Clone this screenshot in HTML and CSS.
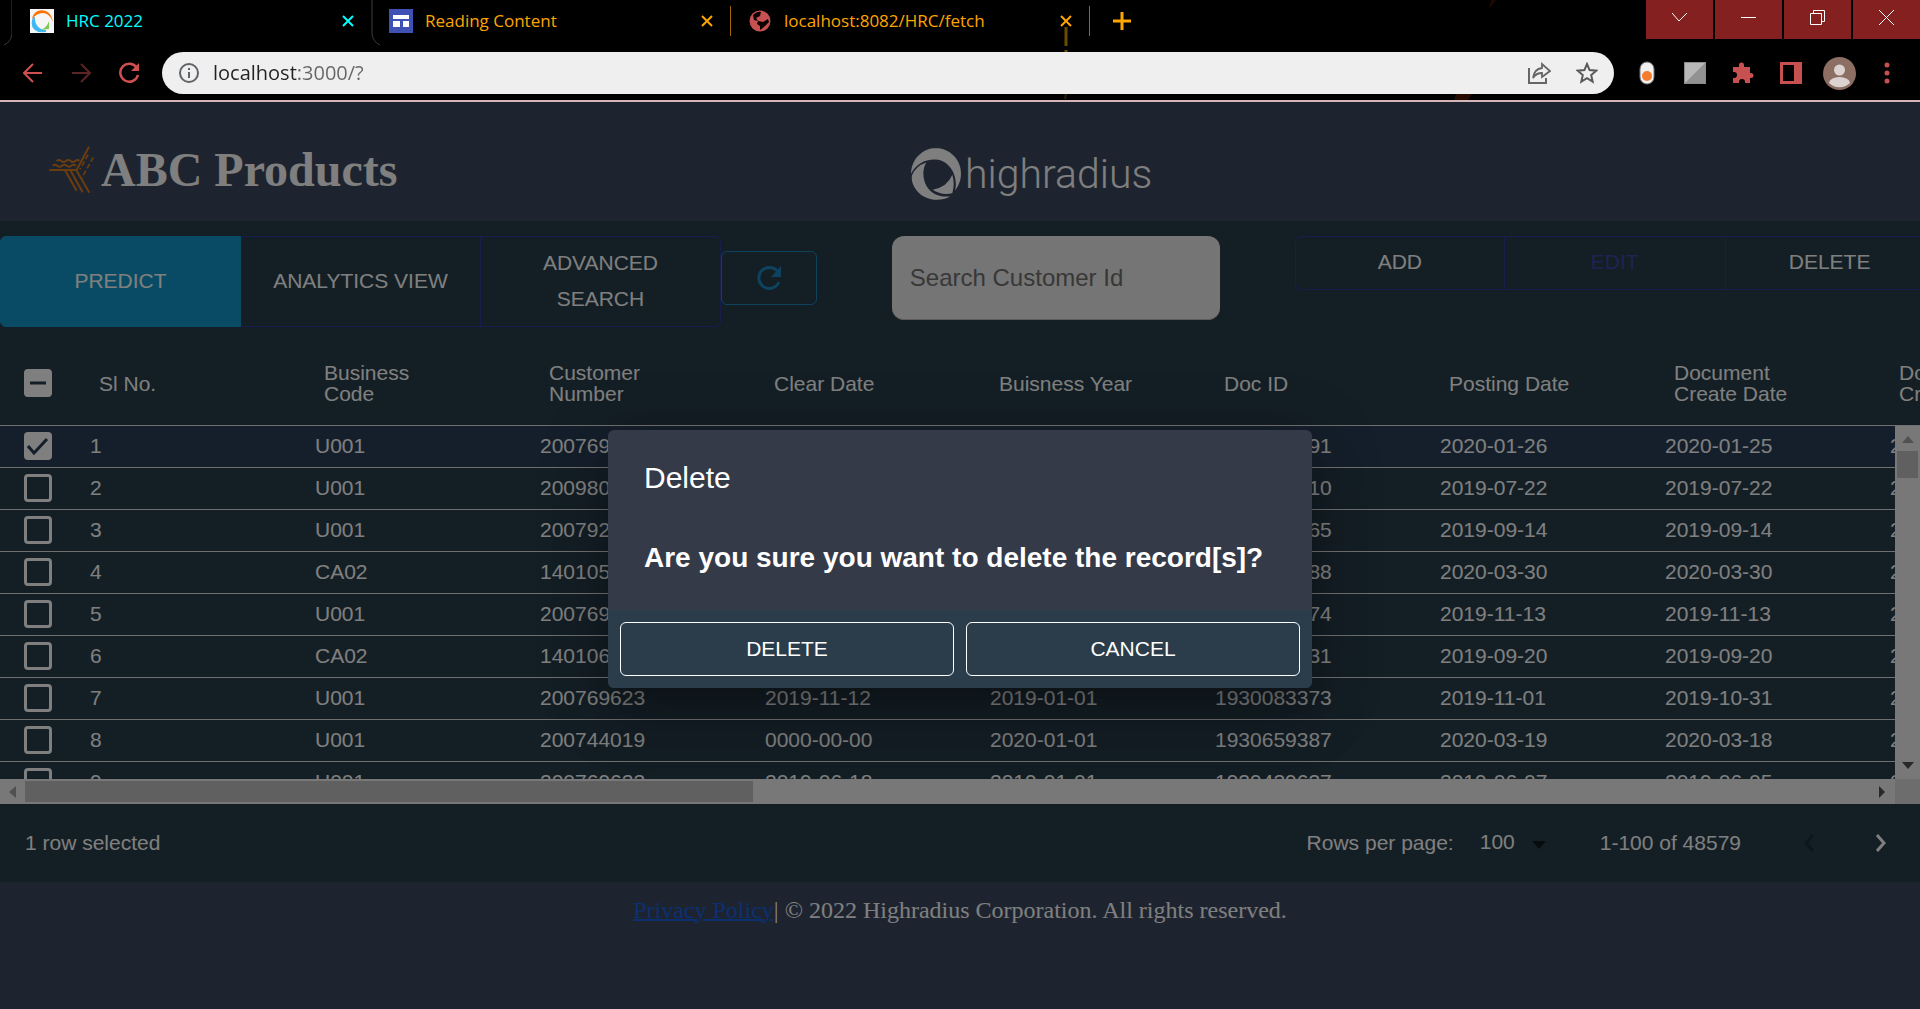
FILE: index.html
```html
<!DOCTYPE html>
<html lang="en">
<head>
<meta charset="utf-8">
<title>HRC 2022</title>
<link rel="stylesheet" href="styles.css">
</head>
<body>
<header class="browser">
  <svg class="browser-sparks" width="460" height="100" viewBox="0 0 460 100" aria-hidden="true">
    <path d="M27 27v19M27 50v2" stroke="#6a4c00" stroke-width="3"/>
    <path d="M27 94l-1 5" stroke="#2c2000" stroke-width="2"/>
    <path d="M417 94h16l-4 6h-14z" fill="#260b00"/>
    <path d="M457 0h-5l-2 9z" fill="#1c0a00"/>
  </svg>
  <div class="tab-row">
    <svg class="tab-edge" width="12" height="46" viewBox="0 0 12 46" aria-hidden="true"><path d="M12 0V34Q11 42 4 45" fill="none" stroke="#3c3c3c"/></svg>
    <div class="tab tab-active">
      <svg width="24" height="24" viewBox="0 0 24 24" aria-hidden="true"><rect width="24" height="24" fill="#f6f6f6"/><path d="M2 10C4-2 21-2 23 13 19 2 9 1 2 10z" fill="#ff7200"/><path d="M4 8C-1 19 7 24 16 22 8 21 4 16 4 8z" fill="#3fb8f5" stroke="#3fb8f5" stroke-width="1.5"/><path d="M19 12v8l-9 1q7-2 9-9z" fill="#7cc95a"/></svg>
      <span class="tab-title">HRC 2022</span>
      <button class="tab-close" aria-label="Close tab"><svg width="12" height="12" viewBox="0 0 12 12"><path d="M1 1l10 10M11 1L1 11"/></svg></button>
      <svg class="tab-curve" width="10" height="46" viewBox="0 0 10 46" aria-hidden="true"><path d="M1 0V34Q2 42 9 45" fill="none" stroke="#3c3c3c"/></svg>
    </div>
    <div class="tab">
      <svg width="24" height="24" viewBox="0 0 24 24" aria-hidden="true"><rect width="24" height="24" fill="#3f51b5"/><path d="M4 6h16v4H4zM4 12h7v6H4zM14 12h6v6h-6z" fill="#fff"/></svg>
      <span class="tab-title">Reading Content</span>
      <button class="tab-close" aria-label="Close tab"><svg width="12" height="12" viewBox="0 0 12 12"><path d="M1 1l10 10M11 1L1 11"/></svg></button>
      <span class="tab-rule"></span>
    </div>
    <div class="tab">
      <svg width="24" height="24" viewBox="0 0 24 24" aria-hidden="true"><circle cx="12" cy="12" r="10.500" fill="#c75050"/><path d="M5 6q4-4 8-3l-1 4-4 2 2 3-4-1zM10 12l5 1 5-3 1 3-5 5-4 3v-4l-3-2z" fill="#0a0000"/></svg>
      <span class="tab-title">localhost:8082/HRC/fetch</span>
      <button class="tab-close" aria-label="Close tab"><svg width="12" height="12" viewBox="0 0 12 12"><path d="M1 1l10 10M11 1L1 11"/></svg></button>
      <span class="tab-rule"></span>
    </div>
    <button class="new-tab" aria-label="New tab"><svg width="18" height="18" viewBox="0 0 18 18"><path d="M9 0v18M0 9h18" stroke="#ffa500" stroke-width="3"/></svg></button>
    <div class="window-buttons">
      <button aria-label="Search tabs"><svg width="17" height="17" viewBox="0 0 17 17"><path d="M1 4l7 8 8-8"/></svg></button>
      <button aria-label="Minimize"><svg width="17" height="17" viewBox="0 0 17 17"><path d="M1 8.500h15"/></svg></button>
      <button aria-label="Restore"><svg width="17" height="17" viewBox="0 0 17 17"><path d="M1.500 4.500h11v11h-11zM4.500 4V1.500h11v11H13"/></svg></button>
      <button aria-label="Close"><svg width="17" height="17" viewBox="0 0 17 17"><path d="M1 1l15 15M16 1L1 16"/></svg></button>
    </div>
  </div>
  <div class="nav-row">
    <button class="slot" aria-label="Back"><svg width="20" height="20" viewBox="0 0 20 20"><path d="M19 10H2M10 1L1 10l9 9" fill="none" stroke="#d05050" stroke-width="2"/></svg></button>
    <button class="slot" aria-label="Forward"><svg width="20" height="20" viewBox="0 0 20 20"><path d="M1 10h17M10 1l9 9-9 9" fill="none" stroke="#5a2424" stroke-width="2"/></svg></button>
    <button class="slot" aria-label="Reload"><svg width="22" height="22" viewBox="0 0 22 22"><path d="M19 6A9 9 0 1 0 20 13" fill="none" stroke="#d05050" stroke-width="2.500"/><path d="M21 1v8h-8z" fill="#d05050"/></svg></button>
    <form class="omnibox">
      <button type="button" class="slot" aria-label="Site information"><svg width="22" height="22" viewBox="0 0 22 22"><circle cx="11" cy="11" r="9" fill="none" stroke="#5f6368" stroke-width="2"/><path d="M11 10v6M11 6v2" stroke="#5f6368" stroke-width="2"/></svg></button>
      <input class="address" type="text" aria-label="Address" value="localhost:3000/?">
      <button type="button" class="slot" aria-label="Share"><svg width="24" height="24" viewBox="0 0 24 24" fill="none" stroke="#666" stroke-width="2"><path d="M2 7v15h17v-5"/><path d="M6 17Q7 8 15 7V3l8 7-8 6v-4Q9 12 6 17z" stroke-width="1.800"/></svg></button>
      <button type="button" class="slot" aria-label="Bookmark"><svg width="22" height="22" viewBox="0 0 22 22"><path d="M11 2l2.600 6.100 6.600.6-5 4.400 1.500 6.500-5.700-3.400-5.700 3.400 1.500-6.500-5-4.400 6.600-.6z" fill="none" stroke="#5a5a5a" stroke-width="2"/></svg></button>
    </form>
    <button class="slot" aria-label="Extension"><svg width="16" height="24" viewBox="0 0 16 24"><rect x="1" y="1" width="14" height="22" rx="7" fill="#f0f0f0" stroke="#777"/><circle cx="8" cy="15" r="5" fill="#f57c2c"/></svg></button>
    <button class="slot" aria-label="Extension"><svg width="22" height="22" viewBox="0 0 22 22"><rect x=".5" y=".5" width="21" height="21" fill="#b8b8b8" stroke="#8b8b8b"/><path d="M21 1v20H1z" fill="#929292"/></svg></button>
    <button class="slot" aria-label="Extensions"><svg width="22" height="22" viewBox="0 0 22 22"><path d="M1 5h6V3a2.500 2.500 0 0 1 5 0v2h6v6h1a2.500 2.500 0 0 1 0 5h-1v5h-5v-1a3 3 0 0 0-6 0v1H1v-5h1a3 3 0 0 0 0-6H1z" fill="#c75050"/></svg></button>
    <button class="slot" aria-label="Side panel"><svg width="22" height="22" viewBox="0 0 22 22"><path d="M0 0h22v22H0zM3 3v16h11V3z" fill="#c75050" fill-rule="evenodd"/></svg></button>
    <button class="slot" aria-label="Profile"><svg width="33" height="33" viewBox="0 0 33 33"><circle cx="16.500" cy="16.500" r="16.500" fill="#8d6e63"/><circle cx="16.500" cy="13" r="5.500" fill="#dcd3d0"/><path d="M6 26a10.500 6 0 0 1 21 0 15 15 0 0 1-21 0z" fill="#dcd3d0"/></svg></button>
    <button class="slot" aria-label="Menu"><svg width="6" height="22" viewBox="0 0 6 22" fill="#c75050"><circle cx="3" cy="3" r="2.500"/><circle cx="3" cy="11" r="2.500"/><circle cx="3" cy="19" r="2.500"/></svg></button>
  </div>
</header>

<div class="viewport">
  <main class="app">
    <div class="brand-bar">
      <div class="account">
        <svg width="45" height="47" viewBox="27 18 135 141" fill="none" stroke="#d67a1c" stroke-width="6" aria-hidden="true">
          <path d="M28 90h82L147 20M76 92l34 60M92 92l36 65M110 92l38 66"/>
          <path d="M50 63q7-6 14 0t14 0 14 0 14 0 12 0M38 77q7-6 14 0t14 0 14 0 14 0 14 0"/>
          <path d="M144 44l-24 44M160 52l-36 64" stroke-dasharray="15 8" stroke-width="5"/>
        </svg>
        <h1>ABC Products</h1>
      </div>
      <div class="logo">
        <svg width="50" height="52" viewBox="33 23 150 155" aria-hidden="true">
          <path d="M33 100A75 77 0 1 1 165 150C176 108 150 60 108 57 76 55 48 70 33 100z" fill="#fff"/>
          <path d="M36 104Q48 76 79 66C62 92 70 136 96 155Q115 170 150 168C122 184 75 182 50 150Q32 128 36 104z" fill="#fff"/>
          <path d="M98 148Q142 140 157 103Q165 130 157 158Q125 166 98 148z" fill="#fff"/>
        </svg>
        <span>highradius</span>
      </div>
    </div>

    <section class="panel">
      <div class="toolbar">
        <div class="group group-left">
          <button class="predict">PREDICT</button><button>ANALYTICS VIEW</button><button>ADVANCED SEARCH</button>
        </div>
        <button class="refresh" aria-label="Refresh"><svg width="24" height="26" viewBox="0 0 24 26"><path d="M21 7A10.500 10.500 0 1 0 22 17" fill="none" stroke="#1c84bd" stroke-width="3"/><path d="M24 1v11H14z" fill="#1c84bd"/></svg></button>
        <input class="search" type="text" placeholder="Search Customer Id" aria-label="Search Customer Id">
        <div class="group group-right">
          <button>ADD</button><button class="edit">EDIT</button><button>DELETE</button>
        </div>
      </div>

      <div class="grid">
        <table>
          <thead>
            <tr><th class="tick"><input type="checkbox" class="partial" aria-label="Select all rows"></th><th>Sl No.</th><th>Business<br>Code</th><th>Customer<br>Number</th><th>Clear Date</th><th>Buisness Year</th><th>Doc ID</th><th>Posting Date</th><th>Document<br>Create Date</th><th>Document<br>Create Date</th></tr>
          </thead>
          <tbody>
            <tr class="selected"><td class="tick"><input type="checkbox" checked aria-label="Select row 1"></td><td>1</td><td>U001</td><td>200769623</td><td>2020-02-11</td><td>2020-01-01</td><td>1930438491</td><td>2020-01-26</td><td>2020-01-25</td><td>2020-01-26</td></tr>
            <tr><td class="tick"><input type="checkbox" aria-label="Select row 2"></td><td>2</td><td>U001</td><td>200980828</td><td>2019-08-08</td><td>2019-01-01</td><td>1929646410</td><td>2019-07-22</td><td>2019-07-22</td><td>2019-07-22</td></tr>
            <tr><td class="tick"><input type="checkbox" aria-label="Select row 3"></td><td>3</td><td>U001</td><td>200792734</td><td>2019-12-30</td><td>2019-01-01</td><td>1929873765</td><td>2019-09-14</td><td>2019-09-14</td><td>2019-09-14</td></tr>
            <tr><td class="tick"><input type="checkbox" aria-label="Select row 4"></td><td>4</td><td>CA02</td><td>140105686</td><td>0000-00-00</td><td>2020-01-01</td><td>2960623488</td><td>2020-03-30</td><td>2020-03-30</td><td>2020-03-30</td></tr>
            <tr><td class="tick"><input type="checkbox" aria-label="Select row 5"></td><td>5</td><td>U001</td><td>200769623</td><td>2019-11-25</td><td>2019-01-01</td><td>1930147974</td><td>2019-11-13</td><td>2019-11-13</td><td>2019-11-13</td></tr>
            <tr><td class="tick"><input type="checkbox" aria-label="Select row 6"></td><td>6</td><td>CA02</td><td>140106181</td><td>2019-12-04</td><td>2019-01-01</td><td>2960581231</td><td>2019-09-20</td><td>2019-09-20</td><td>2019-09-20</td></tr>
            <tr><td class="tick"><input type="checkbox" aria-label="Select row 7"></td><td>7</td><td>U001</td><td>200769623</td><td>2019-11-12</td><td>2019-01-01</td><td>1930083373</td><td>2019-11-01</td><td>2019-10-31</td><td>2019-11-01</td></tr>
            <tr><td class="tick"><input type="checkbox" aria-label="Select row 8"></td><td>8</td><td>U001</td><td>200744019</td><td>0000-00-00</td><td>2020-01-01</td><td>1930659387</td><td>2020-03-19</td><td>2020-03-18</td><td>2020-03-19</td></tr>
            <tr><td class="tick"><input type="checkbox" aria-label="Select row 9"></td><td>9</td><td>U001</td><td>200769623</td><td>2019-06-18</td><td>2019-01-01</td><td>1929439637</td><td>2019-06-07</td><td>2019-06-05</td><td>0000-00-00</td></tr>
          </tbody>
        </table>
        <div class="scroll-y" aria-hidden="true">
          <svg width="12" height="8" viewBox="0 0 12 8"><path d="M0 8l6-7 6 7z" fill="#a3a3a3"/></svg>
          <span class="thumb"></span>
          <svg width="12" height="8" viewBox="0 0 12 8"><path d="M0 0l6 7 6-7z" fill="#505050"/></svg>
        </div>
      </div>
      <div class="scroll-x" aria-hidden="true">
        <div class="track">
          <svg width="7" height="12" viewBox="0 0 7 12"><path d="M7 0L0 6l7 6z" fill="#a3a3a3"/></svg>
          <span class="thumb"></span>
          <svg width="7" height="12" viewBox="0 0 7 12"><path d="M0 0l6 6-6 6z" fill="#505050"/></svg>
        </div>
      </div>

      <div class="pager">
        <span class="picked">1 row selected</span>
        <label for="rows">Rows per page:</label>
        <select id="rows"><option>100</option></select>
        <span class="range">1-100 of 48579</span>
        <button class="prev" disabled aria-label="Previous page"><svg width="12" height="20" viewBox="0 0 12 20"><path d="M10 2L3 10l7 8" /></svg></button>
        <button class="next" aria-label="Next page"><svg width="12" height="20" viewBox="0 0 12 20"><path d="M2 2l7 8-7 8"/></svg></button>
      </div>
    </section>

    <footer class="legal"><a href="#privacy">Privacy Policy</a>| © 2022 Highradius Corporation. All rights reserved.</footer>
  </main>

  <div class="backdrop">
    <div class="dialog" role="dialog" aria-labelledby="dialog-title">
      <h2 id="dialog-title">Delete</h2>
      <p>Are you sure you want to delete the record[s]?</p>
      <div class="dialog-actions"><button>DELETE</button><button>CANCEL</button></div>
    </div>
  </div>
</div>
</body>
</html>
```
FILE: styles.css
```css
* { box-sizing: border-box; }

html, body { height: 100%; }

body {
  margin: 0;
  display: flex;
  flex-direction: column;
  overflow: hidden;
  background: #000;
  font: 21px/24px "Liberation Sans", Arial, sans-serif;
}

button {
  display: flex;
  align-items: center;
  justify-content: center;
  margin: 0;
  padding: 0;
  border: 0;
  background: none;
  color: inherit;
  font: inherit;
}

svg { flex: none; display: block; }

/* Browser window */
.browser {
  position: relative;
  flex: none;
  border-bottom: 2px solid #d3b5b5;
  font: 18px/24px "Open Sans", "Noto Sans", sans-serif;
}

.browser-sparks { position: absolute; top: 0; left: 1039px; }

.tab-row { position: relative; display: flex; height: 46px; }
.tab-edge { margin-right: 18px; }

.tab {
  position: relative;
  display: flex;
  align-items: center;
  gap: 12px;
  width: 359px;
  height: 42px;
  padding-right: 35px;
  color: #ffa500;
}
.tab-active { color: #0ff; }
.tab-title { flex: 1; font-size: 17px; white-space: nowrap; }
.tab-close svg { fill: none; stroke: currentColor; stroke-width: 2; }
.tab-rule { position: absolute; top: 6px; right: 17px; width: 1px; height: 30px; background: #a06800; }
.tab-curve { position: absolute; top: 0; right: 8px; }
.new-tab { width: 30px; height: 42px; }

.window-buttons { display: flex; gap: 2px; margin-left: auto; }
.window-buttons button { width: 67px; height: 39px; padding-bottom: 5px; background: #842020; }
.window-buttons svg { fill: none; stroke: #fff; stroke-width: 1; }

.nav-row { position: relative; display: flex; align-items: center; height: 54px; padding: 0 9px; }
.slot { flex: none; width: 48px; height: 42px; }

.omnibox {
  flex: 1;
  display: flex;
  align-items: center;
  height: 42px;
  margin: 0 9px;
  padding: 0 3px;
  border-radius: 21px;
  background: #efefef;
}
.address {
  flex: 1;
  min-width: 0;
  padding: 0;
  border: 0;
  outline: 0;
  background: linear-gradient(90deg, #222 84px, #666 84px) text;
  color: transparent;
  font: 20px/28px "Open Sans", "Noto Sans", sans-serif;
}

/* Application */
.viewport { position: relative; flex: 1; min-height: 0; overflow: hidden; background: #3c485e; color: #fff; }

.brand-bar { position: relative; display: flex; height: 119px; padding-left: 49px; }
.account { display: flex; align-items: center; gap: 7px; width: 862px; padding-top: 16px; }
.account h1 { margin: 0; font: bold 48px/56px "Liberation Serif", "Times New Roman", serif; }
.logo { display: flex; align-items: center; gap: 4px; padding-top: 24px; }
.logo span { font: 300 41px/52px Roboto, sans-serif; }

.panel { background: #283d4a; }

.toolbar { display: flex; align-items: flex-start; padding: 15px 0 14px; line-height: 36px; }
.group { flex: none; display: flex; }
.group button { border: 1px solid #34389c; }
.group button + button { border-left: 0; }
.group button:first-child { border-radius: 6px 0 0 6px; }
.group button:last-child { border-radius: 0 6px 6px 0; }
.group-left { width: 37.55%; height: 91px; }
.group-left button { flex: 1 1 0; padding: 0 20px 2px; }
.group-left .predict { border-color: #1296c8; background: #1296c8; }
.group-right { width: 33.3%; margin-left: 3.9%; }
.group-right button { flex: 1 1 0; height: 54px; padding-bottom: 2px; }
.group-right .edit { flex-grow: 1.06; color: #3e47a6; }
.refresh { flex: none; width: 5%; height: 54px; margin-top: 15px; border: 1px solid #1c84bd; border-radius: 6px; }
.search {
  flex: none;
  width: 17.1%;
  height: 84px;
  margin-left: 3.9%;
  padding: 0 18px;
  border: 0;
  border-bottom: 1px solid #bbb;
  border-radius: 12px;
  background: #eaeaea;
  color: #333;
  font: 24px/32px "Liberation Sans", Arial, sans-serif;
}
.search::placeholder { color: #707070; opacity: 1; }

.grid { position: relative; height: 438px; overflow: hidden; }
.grid table { width: 2100px; border-collapse: separate; border-spacing: 0; table-layout: fixed; text-align: left; }
.grid th { height: 85px; padding: 0 24px; border-bottom: 1px solid #e0e0e0; font-weight: normal; line-height: 21px; }
.grid td { height: 42px; padding: 0 15px 2px; border-bottom: 1px solid #e0e0e0; }
.grid .tick { width: 75px; padding-left: 24px; }
.grid .selected { background: #2a3e56; }

.grid input {
  appearance: none;
  display: block;
  width: 28px;
  height: 28px;
  margin: 0;
  border: 3px solid #fff;
  border-radius: 4px;
}
.grid input:checked {
  background: #fff url("data:image/svg+xml,%3Csvg xmlns='http://www.w3.org/2000/svg' viewBox='0 0 22 22'%3E%3Cpath d='M1 11l6 7L20 4' fill='none' stroke='%232a3e56' stroke-width='3'/%3E%3C/svg%3E");
}
.grid .partial {
  background: #fff url("data:image/svg+xml,%3Csvg xmlns='http://www.w3.org/2000/svg' viewBox='0 0 22 22'%3E%3Cpath d='M3 11h16' stroke='%23283d4a' stroke-width='3'/%3E%3C/svg%3E");
}

.scroll-y {
  position: absolute;
  top: 85px;
  right: 0;
  bottom: 0;
  display: flex;
  flex-direction: column;
  align-items: center;
  width: 25px;
  padding: 9px 0;
  background: #f0f0f0;
}
.scroll-y .thumb { flex: none; width: 21px; height: 27px; margin: 8px 0 auto; background: #c0c0c0; }
.scroll-x { display: flex; height: 25px; padding-right: 25px; background: #dadada; }
.scroll-x .track { flex: 1; display: flex; align-items: center; padding: 0 9px; background: #f0f0f0; }
.scroll-x .thumb { width: 38.8%; height: 21px; margin: 0 auto 0 9px; background: #c0c0c0; }

.pager { display: flex; align-items: center; height: 78px; padding: 0 15px 0 25px; }
.picked { margin-right: auto; }
.pager select {
  appearance: none;
  width: 66px;
  margin: 0 54px 2px 26px;
  padding: 0;
  border: 0;
  background: url("data:image/svg+xml,%3Csvg xmlns='http://www.w3.org/2000/svg' viewBox='0 0 14 8'%3E%3Cpath d='M0 0h14L7 8z' fill='%2312191d'/%3E%3C/svg%3E") right 13px / 14px 8px no-repeat;
  color: inherit;
  font: 21px/28px "Liberation Sans", Arial, sans-serif;
}
.pager button { width: 48px; height: 48px; }
.pager button svg { fill: none; stroke: #fff; stroke-width: 3; }
.range { margin-right: 44px; }
.pager .prev { margin-right: 24px; }
.pager .prev svg { stroke: #1c2b38; }

.legal { padding: 15px 0; font: 24px/27px "Liberation Serif", "Times New Roman", serif; text-align: center; }
.legal a { color: #1660e0; text-decoration-thickness: 2px; }

/* Confirmation dialog */
.backdrop {
  position: absolute;
  inset: 0;
  display: flex;
  align-items: center;
  justify-content: center;
  padding-top: 7px;
  background: rgba(0, 0, 0, .5);
}
.dialog {
  width: 704px;
  overflow: hidden;
  border-radius: 6px;
  background: #353a48;
  box-shadow: 0 16px 22px -10px rgba(0, 0, 0, .2), 0 36px 57px 4px rgba(0, 0, 0, .14), 0 14px 69px 12px rgba(0, 0, 0, .12);
}
.dialog h2 { margin: 0; padding: 24px 36px; font-size: 30px; font-weight: normal; line-height: 48px; }
.dialog p { margin: 0; padding: 12px 36px 32px; font-size: 28px; font-weight: bold; line-height: 40px; }
.dialog-actions { display: flex; gap: 12px; padding: 12px; background: #2b3d4a; }
.dialog-actions button { flex: 1; height: 54px; border: 1px solid #fff; border-radius: 6px; }
```
